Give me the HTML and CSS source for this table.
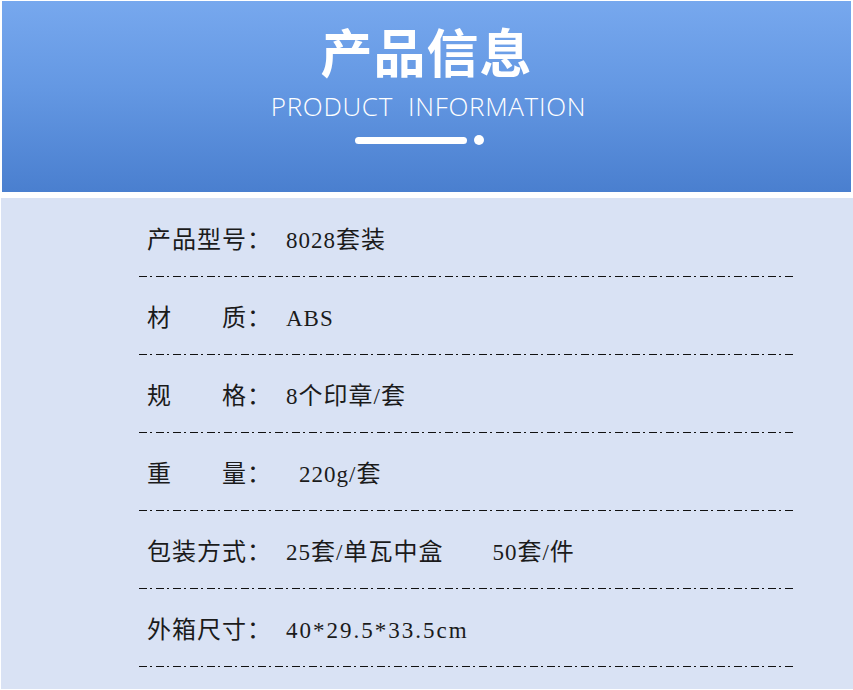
FILE: index.html
```html
<!DOCTYPE html>
<html lang="zh-CN">
<head>
<meta charset="utf-8">
<title>产品信息</title>
<link rel="stylesheet" href="styles.css">
</head>
<body>
<div class="page">
  <header class="banner">
    <h1 class="title">产品信息</h1>
    <div class="subtitle">PRODUCT&nbsp; INFORMATION</div>
    <div class="divider"><span class="bar"></span><span class="dot"></span></div>
  </header>
  <section class="info">
    <div class="row"><span class="label"><span>产品型号：</span></span><span class="value"><span class="num">8028</span>套装</span></div>
    <div class="row"><span class="label"><span>材</span><span>质：</span></span><span class="value"><span class="num">ABS</span></span></div>
    <div class="row"><span class="label"><span>规</span><span>格：</span></span><span class="value"><span class="num">8</span>个印章<span class="num">/</span>套</span></div>
    <div class="row"><span class="label"><span>重</span><span>量：</span></span><span class="value indent"><span class="num">220g/</span>套</span></div>
    <div class="row"><span class="label"><span>包装方式：</span></span><span class="value"><span class="num">25</span>套<span class="num">/</span>单瓦中盒<span class="gap"></span><span class="num">50</span>套<span class="num">/</span>件</span></div>
    <div class="row"><span class="label"><span>外箱尺寸：</span></span><span class="value"><span class="num wide">40*29.5*33.5cm</span></span></div>
  </section>
</div>
</body>
</html>
```

FILE: styles.css
```css
html, body {
  margin: 0;
  padding: 0;
  background: #ffffff;
}
.page {
  width: 853px;
  height: 690px;
  overflow: hidden;
}
.banner {
  margin: 1px 2px 0 2px;
  height: 191px;
  background: linear-gradient(to bottom, #77a8ee 0%, #6498e3 45%, #4a7fcf 100%);
  display: flex;
  flex-direction: column;
  align-items: center;
  color: #ffffff;
}
.title {
  margin: 19px 0 0 0;
  font-family: "Noto Sans CJK SC", sans-serif;
  font-weight: 700;
  font-size: 52px;
  line-height: 62px;
  letter-spacing: 1px;
}
.subtitle {
  margin-top: 9px;
  padding-left: 4px;
  font-family: "Open Sans", "Noto Sans", sans-serif;
  font-weight: 300;
  font-size: 26px;
  line-height: 30px;
  letter-spacing: 0.7px;
}
.divider {
  margin-top: 14px;
  display: flex;
  align-items: center;
  gap: 7px;
  padding-right: 14px;
}
.bar {
  width: 112px;
  height: 7px;
  border-radius: 4px;
  background: #ffffff;
}
.dot {
  width: 10px;
  height: 10px;
  border-radius: 50%;
  background: #ffffff;
}
.info {
  margin: 6px 0 0 1px;
  height: 491px;
  background: #d9e2f4;
  padding: 2px 57px 0 138px;
  box-sizing: border-box;
}
.row {
  height: 77px;
  padding-left: 8px;
  padding-top: 24px;
  box-sizing: border-box;
  margin-bottom: 1px;
  display: flex;
  align-items: flex-start;
  font-family: "Noto Sans CJK SC", sans-serif;
  font-size: 24px;
  line-height: 28px;
  color: #1b1b1b;
  background-image: repeating-linear-gradient(to right, #111 0 8px, transparent 8px 11px, #111 11px 13px, transparent 13px 17px);
  background-size: 100% 1px;
  background-position: 0 100%;
  background-repeat: no-repeat;
}
.label {
  width: 125px;
  display: flex;
  justify-content: space-between;
  letter-spacing: 1px;
  flex-shrink: 0;
}
.value {
  margin-left: 14px;
  letter-spacing: 1px;
  white-space: nowrap;
}
.value.indent {
  margin-left: 27px;
}
.num {
  font-family: "Liberation Serif", serif;
  font-size: 23px;
  letter-spacing: 1px;
}
.num.wide {
  letter-spacing: 2px;
}
.gap {
  display: inline-block;
  width: 49px;
}
```
